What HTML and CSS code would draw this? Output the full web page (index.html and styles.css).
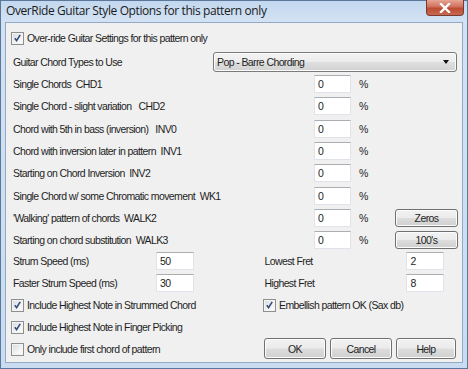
FILE: index.html
```html
<!DOCTYPE html>
<html>
<head>
<meta charset="utf-8">
<link rel="stylesheet" href="styles.css">
</head>
<body>
<div class="window">
  <div class="titlebar">
    <span class="title">OverRide Guitar Style Options for this pattern only</span>
    <span class="close"><svg width="12" height="10" viewBox="0 0 12 10"><path d="M2 1 L10 9 M10 1 L2 9" stroke="#fff" stroke-width="2.4" stroke-linecap="square"/></svg></span>
  </div>
  <div class="client">
    <label class="check row-first">
      <span class="cb on"></span><span>Over-ride Guitar Settings for this pattern only</span>
    </label>
    <div class="row-select">
      <span class="lbl">Guitar Chord Types to Use</span>
      <div class="select"><span>Pop - Barre Chording</span><span class="arrow"></span></div>
    </div>
    <div class="pct-grid">
      <span class="lbl">Single Chords&nbsp; CHD1</span><span class="input">0</span><span class="pct">%</span><span></span>
      <span class="lbl">Single Chord - slight variation&nbsp;&nbsp; CHD2</span><span class="input">0</span><span class="pct">%</span><span></span>
      <span class="lbl">Chord with 5th in bass (inversion)&nbsp;&nbsp; INV0</span><span class="input">0</span><span class="pct">%</span><span></span>
      <span class="lbl">Chord with inversion later in pattern&nbsp; INV1</span><span class="input">0</span><span class="pct">%</span><span></span>
      <span class="lbl">Starting on Chord Inversion&nbsp; INV2</span><span class="input">0</span><span class="pct">%</span><span></span>
      <span class="lbl">Single Chord w/ some Chromatic movement&nbsp; WK1</span><span class="input">0</span><span class="pct">%</span><span></span>
      <span class="lbl">'Walking' pattern of chords&nbsp; WALK2</span><span class="input">0</span><span class="pct">%</span><span class="btn small">Zeros</span>
      <span class="lbl">Starting on chord substitution&nbsp; WALK3</span><span class="input">0</span><span class="pct">%</span><span class="btn small">100's</span>
    </div>
    <div class="lower">
      <div class="col-left">
        <div class="field"><span class="lbl">Strum Speed (ms)</span><span class="input wide">50</span></div>
        <div class="field"><span class="lbl">Faster Strum Speed (ms)</span><span class="input wide">30</span></div>
      </div>
      <div class="col-right">
        <div class="field"><span class="lbl">Lowest Fret</span><span class="input wide">2</span></div>
        <div class="field"><span class="lbl">Highest Fret</span><span class="input wide">8</span></div>
      </div>
    </div>
    <div class="checks">
      <div class="checks-row">
        <label class="check"><span class="cb on"></span><span>Include Highest Note in Strummed Chord</span></label>
        <label class="check right"><span class="cb on"></span><span>Embellish pattern OK (Sax db)</span></label>
      </div>
      <label class="check"><span class="cb on"></span><span>Include Highest Note in Finger Picking</span></label>
      <div class="bottom-row">
        <label class="check"><span class="cb"></span><span>Only include first chord of pattern</span></label>
        <div class="buttons">
          <span class="btn">OK</span>
          <span class="btn">Cancel</span>
          <span class="btn">Help</span>
        </div>
      </div>
    </div>
  </div>
</div>
</body>
</html>
```

FILE: styles.css
```css
html, body {
  margin: 0;
  padding: 0;
  background: #ffffff;
}
.window {
  width: 468px;
  height: 369px;
  box-sizing: border-box;
  border: 1px solid #5b7799;
  background: linear-gradient(180deg, #c2d7ee 0px, #d3e2f3 20px, #c9dcf1 100%);
  padding: 0 4px 5px 4px;
  display: flex;
  flex-direction: column;
  font-family: "Liberation Sans", Arial, sans-serif;
  font-size: 10.5px;
  letter-spacing: -0.6px;
  color: #1e1e1e;
}
.titlebar {
  height: 21px;
  display: flex;
  justify-content: space-between;
  align-items: flex-start;
  flex: none;
}
.title {
  font-family: "Open Sans", "Noto Sans", sans-serif;
  font-size: 12px;
  letter-spacing: -0.4px;
  line-height: 20px;
  margin-left: 1px;
  color: #1a1a1a;
}
.close {
  width: 38px;
  height: 16px;
  margin-right: -1px;
  margin-top: -1px;
  box-sizing: border-box;
  border: 1px solid #7a3a30;
  border-top: none;
  border-radius: 0 0 4px 4px;
  background: linear-gradient(180deg, #e8a595 0%, #d0705c 45%, #bd4b33 55%, #c86a52 100%);
  display: flex;
  align-items: center;
  justify-content: center;
}
.close svg { display: block; }
.client {
  flex: 1;
  background: #f0f0f0;
  border: 1px solid #93a9c4;
  padding: 5px 5px 0 5px;
  display: flex;
  flex-direction: column;
}
.lbl {
  padding-left: 2px;
  white-space: pre;
}
.check {
  display: flex;
  align-items: center;
  height: 22px;
  white-space: pre;
}
.row-first { height: 20px; }
.cb {
  width: 13px;
  height: 13px;
  box-sizing: border-box;
  border: 1px solid #8e8f8f;
  background: linear-gradient(135deg, #d6d9dd 0%, #f4f4f4 60%, #fbfbfb 100%);
  box-shadow: inset 0 0 0 1px #f4f4f4;
  margin-right: 3px;
  flex: none;
  position: relative;
}
.cb.on::after {
  content: "";
  position: absolute;
  left: 2px;
  top: 1px;
  width: 7px;
  height: 8px;
  background: no-repeat center/7px 8px url("data:image/svg+xml;utf8,<svg xmlns='http://www.w3.org/2000/svg' width='7' height='8' viewBox='0 0 7 8'><path d='M0.8 4.2 L2.6 6.6 L6.2 0.8' fill='none' stroke='%23334e7c' stroke-width='1.6'/></svg>");
}
.row-select {
  display: flex;
  align-items: center;
  justify-content: space-between;
  height: 22px;
  margin-top: 3px;
}
.select {
  width: 244px;
  height: 20px;
  box-sizing: border-box;
  border: 1px solid #7a7a7a;
  border-radius: 3px;
  background: linear-gradient(180deg, #f4f4f4 0%, #ececec 48%, #dedede 52%, #d2d2d2 100%);
  box-shadow: inset 0 0 0 1px #fbfbfb;
  display: flex;
  align-items: center;
  justify-content: space-between;
  padding: 0 7px 0 3px;
  white-space: pre;
}
.arrow {
  width: 0;
  height: 0;
  border-left: 3.5px solid transparent;
  border-right: 3.5px solid transparent;
  border-top: 4px solid #111;
}
.pct-grid {
  display: grid;
  grid-template-columns: 303px 37px 44px 63px;
  grid-auto-rows: 22.3px;
  align-items: center;
}
.input {
  height: 18px;
  box-sizing: border-box;
  background: #fff;
  border: 1px solid #e2e3ea;
  border-top-color: #abadb3;
  line-height: 16px;
  padding-left: 3px;
  display: block;
}
.pct {
  padding-left: 8px;
}
.btn {
  height: 21px;
  box-sizing: border-box;
  border: 1px solid #707070;
  border-radius: 3px;
  background: linear-gradient(180deg, #f2f2f2 0%, #ebebeb 48%, #dddddd 52%, #cfcfcf 100%);
  box-shadow: inset 0 0 0 1px #fcfcfc;
  display: flex;
  align-items: center;
  justify-content: center;
}
.btn.small { height: 18px; }
.lower {
  display: flex;
  margin-top: -2px;
}
.col-left { width: 252px; }
.col-right { width: 195px; }
.field {
  display: flex;
  align-items: center;
  height: 22.5px;
}
.col-left .lbl { width: 143px; }
.col-right .lbl { width: 142px; }
.input.wide { width: 38px; }
.checks {
  display: flex;
  flex-direction: column;
  margin-top: 0px;
}
.checks-row {
  display: flex;
}
.checks-row .check:first-child { width: 252px; }
.bottom-row {
  display: flex;
  justify-content: space-between;
  align-items: center;
  height: 22px;
}
.buttons {
  display: flex;
  gap: 4px;
  margin-right: 1px;
  margin-top: -1px;
}
.buttons .btn { width: 62px; }
.buttons .btn:last-child { width: 60px; }
```
